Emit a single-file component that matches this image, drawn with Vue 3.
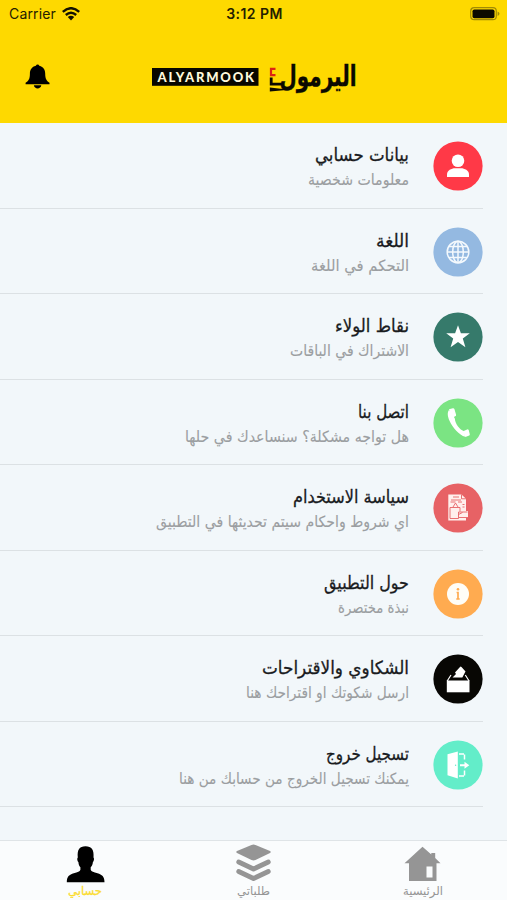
<script setup>
const items = [
  { icon: 'user', color: '#ff3947', title: 'بيانات حسابي', titleWidth: 94, sub: 'معلومات شخصية', subWidth: 101 },
  { icon: 'globe', color: '#94b9e1', title: 'اللغة', titleWidth: 33, sub: 'التحكم في اللغة', subWidth: 98 },
  { icon: 'star', color: '#367a6b', title: 'نقاط الولاء', titleWidth: 74, sub: 'الاشتراك في الباقات', subWidth: 119 },
  { icon: 'phone', color: '#7be483', title: 'اتصل بنا', titleWidth: 51, sub: 'هل تواجه مشكلة؟ سنساعدك في حلها', subWidth: 224 },
  { icon: 'terms', color: '#e76265', title: 'سياسة الاستخدام', titleWidth: 116, sub: 'اي شروط واحكام سيتم تحديثها في التطبيق', subWidth: 253 },
  { icon: 'info', color: '#ffab50', title: 'حول التطبيق', titleWidth: 85, sub: 'نبذة مختصرة', subWidth: 71 },
  { icon: 'box', color: '#080704', title: 'الشكاوي والاقتراحات', titleWidth: 147, sub: 'ارسل شكوتك او اقتراحك هنا', subWidth: 163 },
  { icon: 'exit', color: '#63edc9', title: 'تسجيل خروج', titleWidth: 83, sub: 'يمكنك تسجيل الخروج من حسابك من هنا', subWidth: 230 },
]
</script>

<template>
  <div class="screen">
    <header class="header">
      <div class="status">
        <div class="carrier">
          <span>Carrier</span>
          <svg width="18" height="14" viewBox="0 0 18 14">
            <g fill="none" stroke="#151200" stroke-width="2.4">
              <path d="M.8 4.8Q9-2.4 17.2 4.8" />
              <path d="M3.8 8Q9 3.5 14.2 8" />
            </g>
            <path d="M5.8 10Q9 7.4 12.2 10L9 13.4Z" fill="#151200" />
          </svg>
        </div>
        <span class="time">3:12 PM</span>
        <svg class="battery" width="30" height="14" viewBox="0 0 30 14">
          <rect x=".7" y=".7" width="25.6" height="12" rx="3.5" fill="none" stroke="#a18b05" stroke-width="1.2" />
          <rect x="2.5" y="2.4" width="22" height="8.8" rx="1.8" fill="#0c0a00" />
          <path d="M27.6 4.5Q29.5 5.2 29.5 6.8T27.6 9Z" fill="#a18b05" />
        </svg>
      </div>
      <div class="brandbar">
        <svg class="bell" width="26" height="26" viewBox="0 0 26 26">
          <path d="M11.900 1.800a1.800 1.800 0 0 1 3.400 0C19.600 2.800 21.200 6.100 21.200 9.600c0 5 1.200 7.500 4.300 9.100v1.500H1.600v-1.500C4.800 17.100 5.900 14.600 5.900 9.600c0-3.600 1.800-6.900 6-7.800Z" />
          <path d="M9.900 21.300h7.400c-.5 4.200-6.900 4.200-7.400 0Z" />
        </svg>
        <svg class="logo" width="210" height="46" viewBox="0 -3 210 46">
          <rect x="2" y="11" width="106.500" height="17.800" fill="#080700" />
          <text class="latin" x="7.500" y="24.500" textLength="96.500">ALYARMOOK</text>
          <text class="arabic" x="206.500" y="28.500" textLength="77" direction="rtl" lengthAdjust="spacingAndGlyphs">اليرمول</text>
          <path d="M125.500 11.900h-4.500v6.200h4.500" fill="none" stroke="#dd2414" stroke-width="2.200" />
          <path d="M121.200 20.500v6.700h11" fill="none" stroke="#0b0900" stroke-width="2.800" />
          <path d="M119.800 30.500l19.500 2.300-19.500 1.800Z" fill="#0b0900" />
        </svg>
      </div>
    </header>

    <main class="list">
      <section v-for="item in items" :key="item.icon" class="row">
        <div class="copy">
          <svg class="line title" :width="item.titleWidth" height="28">
            <text :x="item.titleWidth" y="19.500" direction="rtl" :textLength="item.titleWidth" lengthAdjust="spacingAndGlyphs">{{ item.title }}</text>
          </svg>
          <svg class="line sub" :width="item.subWidth" height="24">
            <text :x="item.subWidth" y="15.500" direction="rtl" :textLength="item.subWidth" lengthAdjust="spacingAndGlyphs">{{ item.sub }}</text>
          </svg>
        </div>
        <svg class="icon" width="50" height="50" viewBox="0 0 50 50">
          <circle cx="25" cy="25" r="24.600" :fill="item.color" />
          <g v-if="item.icon === 'user'" fill="#fff">
            <circle cx="25" cy="19.800" r="6.300" />
            <path d="M14 36v-2.500c0-4 4.500-6.200 8-6.200h6c3.500 0 8 2.200 8 6.200V36Z" />
          </g>
          <g v-else-if="item.icon === 'globe'" fill="none" stroke="#f4f9fd" stroke-width="1.500">
            <circle cx="25" cy="25" r="10.800" />
            <ellipse cx="25" cy="25" rx="5.300" ry="10.800" />
            <path d="M25 14v22M14 25h22M16 19.500h18M16 30.500h18" />
          </g>
          <path v-else-if="item.icon === 'star'" fill="#fff" d="M25 13.300l2.900 8h8.900l-7 5.200 2.600 8.700-7.400-5.200-7.400 5.200 2.600-8.700-7-5.200h8.900Z" />
          <g v-else-if="item.icon === 'phone'" fill="#fff">
            <path d="M16 12c-2 2.500-1.300 6.500.5 10.700 3.300 7.400 9.500 14.200 15.800 16.100l-1.700-5.900c-3.900-1.400-8.500-7.400-8.700-12l-.3-1Z" />
            <path d="M16 11.300l3.900-1.100q1.100-.2 1.500.8l1.700 5.800q.2 1-.8 1.500L18.700 20ZM29.600 33.600l4.500-2.200q1-.4 1.600.6l1 4q.4 1-.5 1.600l-3.800 1.500Z" />
          </g>
          <g v-else-if="item.icon === 'terms'">
            <path d="M15.300 11.500h13.200l4.500 4.300V28h2v7h-2v2.500H15.300Z" fill="#fff0ed" />
            <g fill="none" stroke="#e76265" stroke-width=".9">
              <path d="M28.500 11.500v4.300H33M20 14h6M18 17h10M17.500 19h5M25 19h4M29.500 21.500h2M29.500 24h2M20 24l2.500-4 2.500 4M17 24.500h10v4M17 24.500v11h8.500V29h9M26 34.500h9M25.500 31.500l4-2" />
            </g>
          </g>
          <g v-else-if="item.icon === 'info'">
            <circle cx="25" cy="25" r="11" fill="#fffdf7" />
            <circle cx="25" cy="20.200" r="1.300" fill="#ffab50" />
            <path d="M23.600 23.500H25v6M23.300 30h3.400" fill="none" stroke="#ffab50" stroke-width="1.700" />
          </g>
          <g v-else-if="item.icon === 'box'" fill="#fff">
            <path d="M13.800 26.500h22.700v11.800H13.800Z" />
            <path d="M19.500 23.500l3.500-3.500-1-1.500 5-5.600q.7-.8 1.500 0l4 4.500-3.200 6.100Z" />
            <path d="M14.200 27l3.800-6M36.100 27l-3.800-6" stroke="#fff" stroke-width="1.200" />
            <path d="M17.500 24.800h15.300" stroke="#080704" stroke-width="1.200" />
          </g>
          <g v-else>
            <path d="M14.500 14.200L24.800 11.500v27l-10.300-3.200Z" fill="#fff" />
            <circle cx="22.600" cy="25.200" r=".7" fill="#63edc9" />
            <path d="M26 14h5.500v6M26 36h5.500v-6" fill="none" stroke="#fff" stroke-width="1.500" stroke-dasharray="5 1" />
            <path d="M27 24.300h4.500v-2.500l4.800 3.500-4.800 3.500v-2.500H27Z" fill="#fff" />
          </g>
        </svg>
      </section>
    </main>

    <nav class="tabs">
      <div class="tab active">
        <svg width="40" height="40" viewBox="0 0 40 40">
          <path d="M1.800 38.200c0-5.700 2.500-7.700 7-9 4-1.200 6-1.700 6.600-3.500v-2.500c-1.300-1-1.900-3-2-5.200-1-.5-1.600-3.900-.6-4.600-.7-7.500 1.500-11.200 7.700-11.200s8.700 3.700 8 11.200c1 .7.400 4.100-.6 4.600-.1 2.200-.9 4.200-2.200 5.200v2.500c.6 1.800 3 2.300 6.800 3.500 4.500 1.300 7 3.300 7 9Z" />
        </svg>
        <svg class="label" width="34" height="18"><text x="34" y="11" direction="rtl" textLength="34" lengthAdjust="spacingAndGlyphs">حسابي</text></svg>
      </div>
      <div class="tab">
        <svg width="40" height="40" viewBox="0 0 40 40">
          <path d="M17.500 1q2-.8 4 0l14.500 6q1.500 1 0 2l-14.500 7q-2 .9-4 0L3 9q-1.500-1 0-2Z" />
          <g fill="none" stroke="#959595" stroke-width="4.800" stroke-linecap="round" stroke-linejoin="round">
            <path d="M4.700 18l14.800 7 14.800-7M4.700 27.500l14.800 7 14.800-7" />
          </g>
        </svg>
        <svg class="label" width="33" height="18"><text x="33" y="11" direction="rtl" textLength="33" lengthAdjust="spacingAndGlyphs">طلباتي</text></svg>
      </div>
      <div class="tab">
        <svg width="40" height="40" viewBox="0 0 40 40">
          <path fill-rule="evenodd" d="M19.500 2.700l8.800 7.800V9h3.900v5l5.300 5.300h-4V37H6V19.300H1.500ZM23.500 22.500v11h6v-11Z" />
        </svg>
        <svg class="label" width="40" height="18"><text x="40" y="11" direction="rtl" textLength="40" lengthAdjust="spacingAndGlyphs">الرئيسية</text></svg>
      </div>
    </nav>
  </div>
</template>

<style>
body { background: #f2f7fa; }
</style>

<style scoped>
.screen { width: 507px; height: 900px; display: flex; flex-direction: column; background: #f2f7fa; overflow: hidden; font-family: Inter, sans-serif; }
svg { display: block; flex: none; }
.header { height: 123px; background: #fed900; flex: none; }
.status { height: 27px; display: grid; grid-template-columns: 1fr auto 1fr; align-items: center; padding: 0 7px 0 9px; color: #252000; font-size: 14px; }
.carrier { display: flex; align-items: center; gap: 6px; letter-spacing: .15px; }
.time { font-weight: 600; font-size: 14px; letter-spacing: .45px; }
.battery { justify-self: end; }
.brandbar { display: flex; align-items: center; padding: 27px 0 0 24px; height: 45px; }
.logo { margin-left: 100px; overflow: visible; }
.latin { font: 900 13px Lato, sans-serif; fill: #fff9dc; }
.arabic { font: 700 29px "DejaVu Sans", sans-serif; fill: #0b0900; stroke: #0b0900; stroke-width: .4px; }
.row { height: 85.500px; box-sizing: border-box; margin-right: 24px; border-bottom: 1px solid #dce1e4; display: flex; justify-content: flex-end; gap: 24px; padding-top: 18px; }
.copy { display: flex; flex-direction: column; align-items: flex-end; }
.line { overflow: visible; font-family: "DejaVu Sans", sans-serif; }
.title { font-size: 18px; fill: #191b1e; stroke: #191b1e; stroke-width: .3px; }
.sub { font-size: 15.500px; fill: #9b9ea1; stroke: #9b9ea1; stroke-width: .1px; }
.tabs { margin-top: auto; height: 60px; box-sizing: border-box; border-top: 1px solid #dfe4e7; background: #fafcfd; display: grid; grid-template-columns: repeat(3, 1fr); }
.tab { display: flex; flex-direction: column; align-items: center; padding-top: 3px; fill: #959595; }
.active { fill: #000; }
.label { overflow: visible; font: 12px "DejaVu Sans", sans-serif; }
.active .label { fill: #fbdc32; stroke: #fbdc32; stroke-width: .3px; }
</style>
